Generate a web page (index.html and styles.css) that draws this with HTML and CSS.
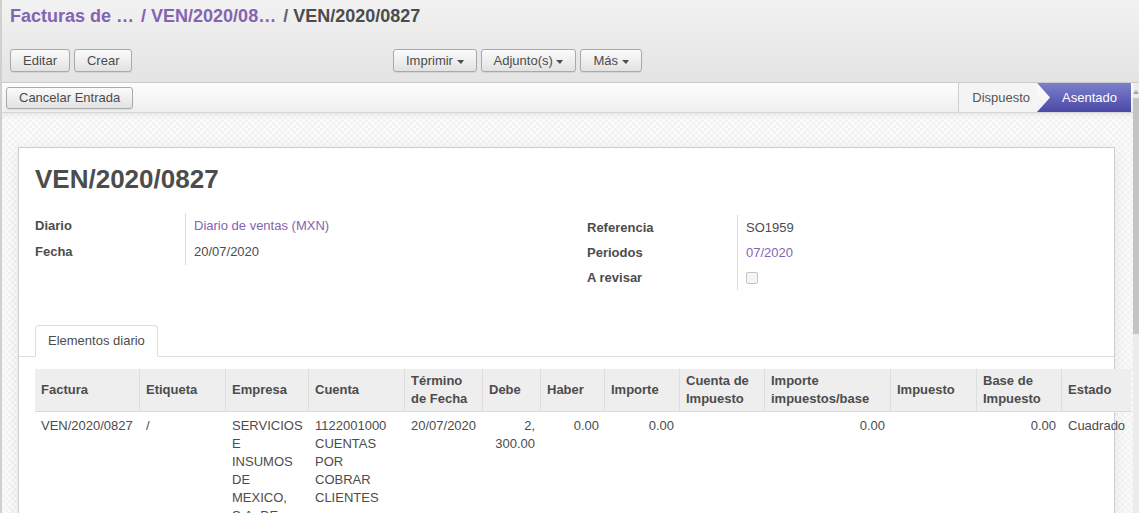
FILE: index.html
```html
<!DOCTYPE html>
<html lang="es">
<head>
    <meta charset="UTF-8">
    <title>VEN/2020/0827</title>
    <link rel="stylesheet" href="styles.css">
</head>
<body>
<div class="app">
    <div class="control-panel">
        <ol class="breadcrumb">
            <li><a href="#">Facturas de …</a></li>
            <li class="sep link">/</li>
            <li><a href="#">VEN/2020/08…</a></li>
            <li class="sep">/</li>
            <li class="current">VEN/2020/0827</li>
        </ol>
        <div class="cp-buttons">
            <div class="cp-left">
                <button class="btn">Editar</button>
                <button class="btn">Crear</button>
            </div>
            <div class="cp-sidebar">
                <button class="btn">Imprimir <span class="caret"></span></button>
                <button class="btn">Adjunto(s) <span class="caret"></span></button>
                <button class="btn">Más <span class="caret"></span></button>
            </div>
        </div>
    </div>

    <div class="main">
        <div class="scroller">
            <div class="form-header">
                <button class="btn btn-small">Cancelar Entrada</button>
                <div class="statusbar">
                    <span class="status">Dispuesto</span>
                    <span class="status active">Asentado</span>
                </div>
            </div>

            <div class="sheet-bg">
                <div class="sheet">
                    <h1 class="title">VEN/2020/0827</h1>

                    <div class="groups">
                        <table class="fields">
                            <tr><td class="label">Diario</td><td class="value"><a href="#">Diario de ventas (MXN)</a></td></tr>
                            <tr><td class="label">Fecha</td><td class="value">20/07/2020</td></tr>
                        </table>
                        <table class="fields fields-right">
                            <tr><td class="label">Referencia</td><td class="value">SO1959</td></tr>
                            <tr><td class="label">Periodos</td><td class="value"><a href="#">07/2020</a></td></tr>
                            <tr><td class="label">A revisar</td><td class="value"><span class="checkbox"></span></td></tr>
                        </table>
                    </div>

                    <div class="tabs">
                        <span class="tab">Elementos diario</span>
                    </div>

                    <table class="lines">
                        <colgroup>
                            <col style="width:105px"><col style="width:86px"><col style="width:83px">
                            <col style="width:96px"><col style="width:78px"><col style="width:58px">
                            <col style="width:64px"><col style="width:75px"><col style="width:85px">
                            <col style="width:126px"><col style="width:86px"><col style="width:85px">
                            <col style="width:69px">
                        </colgroup>
                        <thead>
                            <tr>
                                <th>Factura</th>
                                <th>Etiqueta</th>
                                <th>Empresa</th>
                                <th>Cuenta</th>
                                <th>Término de Fecha</th>
                                <th>Debe</th>
                                <th>Haber</th>
                                <th>Importe</th>
                                <th>Cuenta de Impuesto</th>
                                <th>Importe impuestos/base</th>
                                <th>Impuesto</th>
                                <th>Base de Impuesto</th>
                                <th>Estado</th>
                            </tr>
                        </thead>
                        <tbody>
                            <tr>
                                <td>VEN/2020/0827</td>
                                <td>/</td>
                                <td>SERVICIOS E INSUMOS DE MEXICO, S.A. DE C.V.</td>
                                <td>1122001000 CUENTAS POR COBRAR CLIENTES</td>
                                <td>20/07/2020</td>
                                <td class="num">2,<wbr>300.00</td>
                                <td class="num">0.00</td>
                                <td class="num">0.00</td>
                                <td></td>
                                <td class="num">0.00</td>
                                <td></td>
                                <td class="num">0.00</td>
                                <td>Cuadrado</td>
                            </tr>
                        </tbody>
                    </table>
                </div>
            </div>
        </div>
        <div class="scrollbar">
            <span class="scroll-arrow"></span>
            <span class="scroll-thumb"></span>
        </div>
    </div>
</div>
</body>
</html>
```

FILE: styles.css
```css
body {
    margin: 0;
    height: 513px;
    overflow: hidden;
    font-family: "Liberation Sans", Arial, sans-serif;
    font-size: 13px;
    line-height: 18px;
    color: #4c4c4c;
}
a {
    color: #8464b0;
    text-decoration: none;
}

.app {
    display: flex;
    flex-direction: column;
    height: 513px;
    border-left: 2px solid #d0d0d0;
}

/* barra superior */
.control-panel {
    height: 82px;
    padding: 0 8px;
    border-bottom: 1px solid #cbcbcb;
    background: linear-gradient(#f2f2f2, #e4e4e4);
    flex-shrink: 0;
}
.breadcrumb {
    display: flex;
    margin: 0;
    padding: 6px 0 0;
    list-style: none;
    font-size: 18px;
    font-weight: bold;
    line-height: 20px;
}
.breadcrumb .sep {
    margin: 0 5px 0 7px;
    color: #666;
}
.breadcrumb .sep.link {
    color: #8464b0;
}
.breadcrumb .current {
    color: #4c4c4c;
}
.cp-buttons {
    display: flex;
    margin-top: 23px;
}
.cp-left {
    display: flex;
    gap: 4px;
    width: 383px;
}
.cp-sidebar {
    display: flex;
    gap: 4px;
}

.btn {
    height: 23px;
    padding: 0 12px;
    border: 1px solid #a9a9a9;
    border-radius: 3px;
    background: linear-gradient(#fbfbfb, #e2e2e2);
    box-shadow: 0 1px 1px rgba(0, 0, 0, 0.08);
    font: 13px "Liberation Sans", Arial, sans-serif;
    color: #4c4c4c;
    cursor: pointer;
}
.btn-small {
    height: 22px;
    align-self: center;
}
.caret {
    display: inline-block;
    vertical-align: middle;
    border-top: 4px solid #4c4c4c;
    border-left: 4px solid transparent;
    border-right: 3px solid transparent;
}

.main {
    display: flex;
    flex: 1;
    min-height: 0;
}
.scroller {
    display: flex;
    flex-direction: column;
    flex: 1;
    min-width: 0;
    overflow: hidden;
}

/* cabecera del formulario */
.form-header {
    display: flex;
    justify-content: space-between;
    height: 29px;
    padding: 0 2px 0 4px;
    border-bottom: 1px solid #d6d6d6;
    background: linear-gradient(#fdfdfd, #efefef);
    flex-shrink: 0;
}
.statusbar {
    display: flex;
}
.status {
    display: flex;
    align-items: center;
    padding: 0 7px 0 13px;
    border-left: 1px solid #cfcfcf;
    background: #f4f4f4;
    color: #555;
}
.status.active {
    padding: 0 14px 0 25px;
    border-left: none;
    background: linear-gradient(#7c80cc, #4a49a4);
    color: #fff;
    clip-path: polygon(0 0, 100% 0, 100% 100%, 0 100%, 13px 50%);
}

/* hoja */
.sheet-bg {
    flex: 1;
    padding: 34px 18px 0 16px;
    background: repeating-conic-gradient(#f3f3f3 0 25%, #fbfbfb 0 50%) 0 0 / 6px 6px;
    box-shadow: inset 0 4px 6px -4px rgba(0, 0, 0, 0.12);
}
.sheet {
    min-height: 600px;
    padding: 17px 16px 0;
    border: 1px solid #cdcdd6;
    background: #fff;
    box-shadow: 0 3px 14px rgba(0, 0, 0, 0.08);
}
.title {
    margin: 0;
    font-size: 26px;
    line-height: 29px;
    font-weight: bold;
    color: #4c4c4c;
}

.groups {
    display: grid;
    grid-template-columns: 552px 1fr;
    align-items: start;
    margin-top: 19px;
}
.fields {
    border-collapse: collapse;
}
.fields td {
    height: 26px;
    padding: 0;
    vertical-align: middle;
}
.fields-right {
    margin-top: 2px;
}
.fields-right td {
    height: 25px;
}
.fields .label {
    width: 150px;
    border-right: 1px solid #dcdcdc;
    font-weight: bold;
    line-height: 14px;
}
.fields .value {
    padding-left: 8px;
}
.checkbox {
    display: inline-block;
    width: 10px;
    height: 10px;
    border: 1px solid #c6c6c6;
    border-radius: 2px;
    background: #f4f4f4;
    vertical-align: middle;
}

.tabs {
    display: flex;
    margin: 35px -16px 0;
    padding-left: 16px;
    border-bottom: 1px solid #dddddd;
}
.tab {
    margin-bottom: -1px;
    padding: 0 12px;
    line-height: 30px;
    border: 1px solid #dddddd;
    border-bottom-color: #fff;
    border-radius: 4px 4px 0 0;
    background: #fff;
}

.lines {
    width: 1096px;
    margin-top: 12px;
    table-layout: fixed;
    border-collapse: separate;
    border-spacing: 0;
}
.lines th {
    height: 42px;
    padding: 0 6px;
    border-right: 1px solid #dedede;
    border-bottom: 1px solid #dadada;
    background: #eeeeee;
    text-align: left;
    font-weight: bold;
    vertical-align: middle;
}
.lines th:last-child {
    border-right: none;
}
.lines td {
    padding: 5px 6px 3px;
    vertical-align: top;
}
.lines td.num {
    text-align: right;
}

.scrollbar {
    display: flex;
    flex-direction: column;
    align-items: center;
    width: 6px;
    background: #ececec;
}
.scroll-arrow {
    margin-top: 7px;
    border-bottom: 4px solid #a8a8a8;
    border-left: 3px solid transparent;
    border-right: 3px solid transparent;
}
.scroll-thumb {
    width: 6px;
    height: 236px;
    margin-top: 4px;
    background: #c4c4c4;
}
```
